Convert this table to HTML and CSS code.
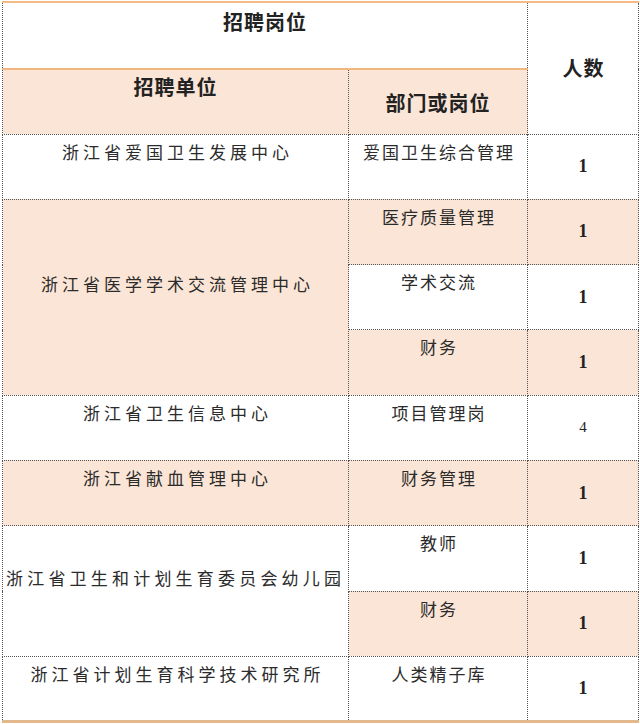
FILE: index.html
```html
<!DOCTYPE html>
<html lang="zh">
<head>
<meta charset="utf-8">
<link rel="stylesheet" href="styles.css">
</head>
<body>
<table class="jobs">
  <colgroup>
    <col class="c-unit">
    <col class="c-post">
    <col class="c-num">
  </colgroup>
  <thead>
    <tr class="h1">
      <th colspan="2" class="hd-top">招聘岗位</th>
      <th rowspan="2" class="hd-num">人数</th>
    </tr>
    <tr class="h2">
      <th class="hd-unit">招聘单位</th>
      <th class="hd-post">部门或岗位</th>
    </tr>
  </thead>
  <tbody>
    <tr>
      <td class="unit">浙江省爱国卫生发展中心</td>
      <td class="post">爱国卫生综合管理</td>
      <td class="num">1</td>
    </tr>
    <tr class="tint">
      <td class="unit span" rowspan="3">浙江省医学学术交流管理中心</td>
      <td class="post">医疗质量管理</td>
      <td class="num">1</td>
    </tr>
    <tr>
      <td class="post">学术交流</td>
      <td class="num">1</td>
    </tr>
    <tr class="tint">
      <td class="post">财务</td>
      <td class="num">1</td>
    </tr>
    <tr>
      <td class="unit">浙江省卫生信息中心</td>
      <td class="post">项目管理岗</td>
      <td class="num plain">4</td>
    </tr>
    <tr class="tint">
      <td class="unit">浙江省献血管理中心</td>
      <td class="post">财务管理</td>
      <td class="num">1</td>
    </tr>
    <tr>
      <td class="unit span white" rowspan="2">浙江省卫生和计划生育委员会幼儿园</td>
      <td class="post">教师</td>
      <td class="num">1</td>
    </tr>
    <tr class="tint">
      <td class="post">财务</td>
      <td class="num">1</td>
    </tr>
    <tr class="last">
      <td class="unit">浙江省计划生育科学技术研究所</td>
      <td class="post">人类精子库</td>
      <td class="num">1</td>
    </tr>
  </tbody>
</table>
</body>
</html>
```

FILE: styles.css
```css
html, body {
  margin: 0;
  padding: 0;
  background: #ffffff;
}

body {
  padding: 1px 0 0 2px;
  font-family: "Noto Sans CJK SC", "Noto Sans", sans-serif;
  color: #2b2b2b;
}

.jobs {
  border-collapse: collapse;
  table-layout: fixed;
  width: 636px;
  border-top: 2px solid #f4bb86;
  border-bottom: 3px solid #e2b88c;
  border-left: 1px dotted #444;
  border-right: 1px dotted #444;
}

.c-unit { width: 346px; }
.c-post { width: 179px; }
.c-num { width: 111px; }

.jobs th,
.jobs td {
  border: 1px dotted #555;
  text-align: center;
  white-space: nowrap;
}

.jobs th {
  font-weight: 700;
  font-size: 20px;
  letter-spacing: 1px;
  line-height: 26px;
  color: #222;
}

.h1 { height: 67px; }
.h2 { height: 65px; }

.jobs .hd-top {
  vertical-align: top;
  padding: 6px 0 0 0;
  background: #ffffff;
  border-bottom: 2px solid #f2b57f;
}

.jobs .hd-num {
  vertical-align: middle;
  background: #ffffff;
  padding: 0 0 0 1px;
}

.jobs .hd-unit {
  vertical-align: top;
  padding: 4px 0 0 0;
  background: #fbe5d6;
}

.jobs .hd-post {
  vertical-align: top;
  padding: 20px 0 0 0;
  background: #fbe5d6;
}

.jobs tbody tr { height: 65.3px; }

.jobs .tint td { background: #fbe5d6; }

.jobs .unit {
  vertical-align: top;
  font-size: 17px;
  line-height: 24px;
  letter-spacing: 4px;
  padding: 5px 0 0 4px;
}

.jobs .unit.span {
  vertical-align: middle;
  padding: 0 0 27px 4px;
  background: #fbe5d6;
}

.jobs .unit.span.white {
  background: #ffffff;
  letter-spacing: 4.2px;
  text-align: left;
  padding-left: 3px;
}

.jobs .post {
  vertical-align: top;
  font-size: 17px;
  line-height: 24px;
  letter-spacing: 2px;
  padding: 5px 0 0 2px;
}

.jobs .num {
  vertical-align: middle;
  padding: 0;
  font-family: "Liberation Serif", serif;
  font-weight: 700;
  font-size: 18px;
  color: #222;
}

.jobs .num.plain {
  font-weight: 400;
  font-size: 15px;
}
```
